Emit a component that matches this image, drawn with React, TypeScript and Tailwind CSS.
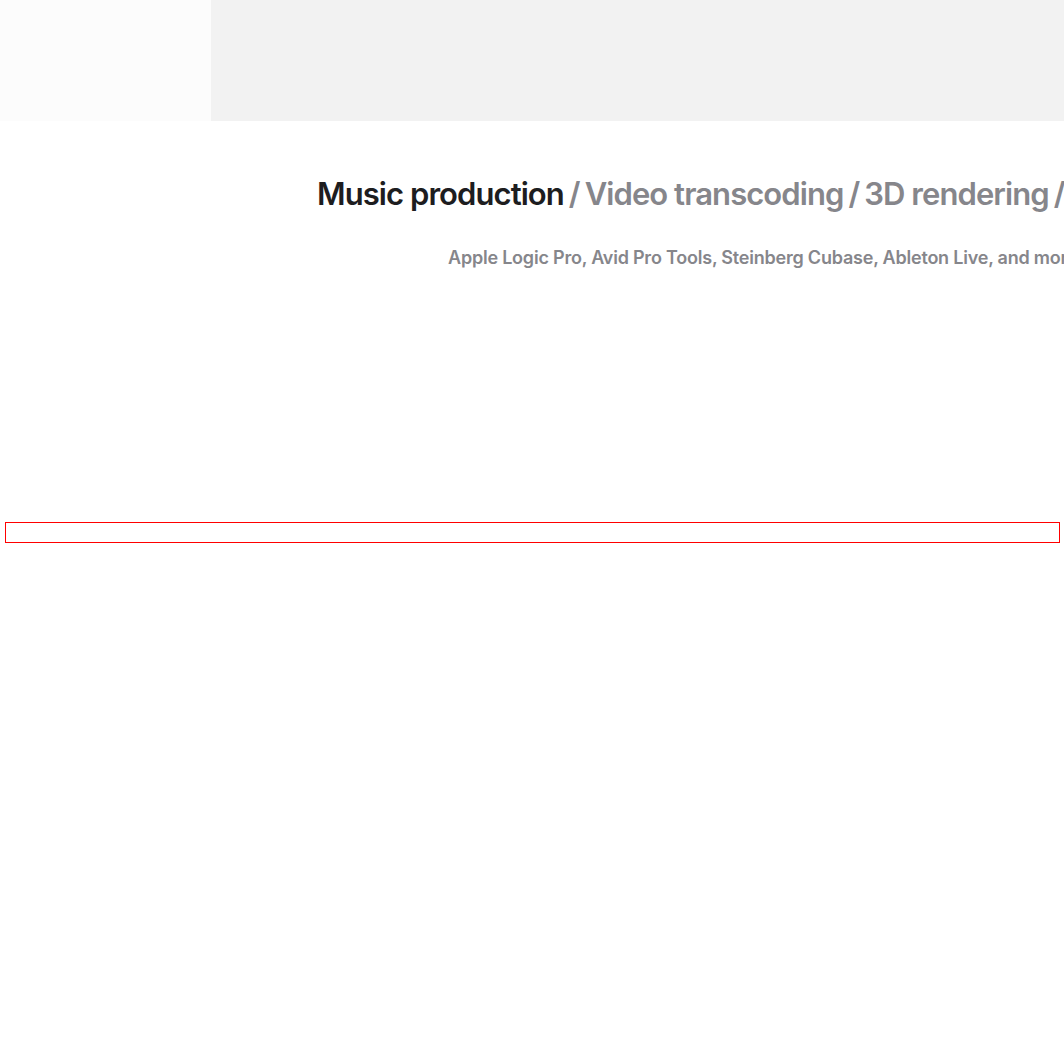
import React from 'react';

const TOPICS = ['Music production', 'Video transcoding', '3D rendering', 'Software development'];

const App: React.FC = () => {
  return (
    <div className="w-[1064px] h-[1064px] bg-white overflow-hidden relative" style={{ fontFamily: 'Inter, "Noto Sans", sans-serif' }}>
      {/* Top band */}
      <div className="flex h-[121px]">
        <div className="w-[211px] bg-[#fcfcfc]"></div>
        <div className="flex-1 bg-[#f2f2f2]"></div>
      </div>

      {/* Topic heading */}
      <div className="pl-[317px] pt-[54px] whitespace-nowrap">
        <h2 className="text-[31px] leading-[38px] font-semibold tracking-[-0.03em] text-[#86868b]">
          {TOPICS.map((t, i) => (
            <span key={t}>
              {i > 0 && <span className="mx-[5px]">/</span>}
              <span className={i === 0 ? 'text-[#1d1d1f]' : ''}>{t}</span>
            </span>
          ))}
        </h2>
      </div>

      <div className="pl-[448px] pt-[34px] whitespace-nowrap">
        <p className="text-[18px] leading-[22px] font-semibold tracking-[-0.012em] text-[#86868b]">
          Apple Logic Pro, Avid Pro Tools, Steinberg Cubase, Ableton Live, and more
        </p>
      </div>

      {/* Red outline strip */}
      <div className="mt-[253px] ml-[5px] w-[1055px] h-[21px] border border-[#ff0000]"></div>
    </div>
  );
};

export default App;
